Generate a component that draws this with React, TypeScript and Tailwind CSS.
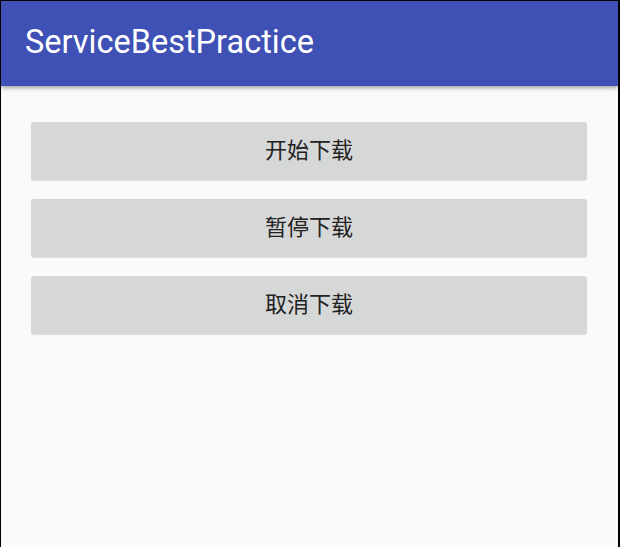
import React from 'react'

const buttons = ['开始下载', '暂停下载', '取消下载']

const App = () => {
  return (
    <div className="w-[620px] h-[547px] bg-black pt-px pl-px pr-[2px] overflow-hidden">
      <div className="h-full bg-[#fafafa] flex flex-col font-['Roboto','Noto_Sans_CJK_SC',sans-serif]">
        <div className="h-[85px] bg-[#3f51b5] flex items-center pl-[24px] pb-[3px] shadow-[0_2px_4px_rgba(0,0,0,0.35)] relative z-10">
          <h1 className="text-white text-[32.5px] leading-none">ServiceBestPractice</h1>
        </div>
        <div className="flex flex-col gap-[19.5px] px-[30px] pt-[36px]">
          {buttons.map((b) => (
            <button
              key={b}
              className="h-[57.5px] w-[556px] bg-[#d6d7d7] rounded-[3px] shadow-[0_1px_1px_rgba(0,0,0,0.12)] text-[#222] text-[22px] flex items-center justify-center"
            >
              {b}
            </button>
          ))}
        </div>
      </div>
    </div>
  )
}

export default App
